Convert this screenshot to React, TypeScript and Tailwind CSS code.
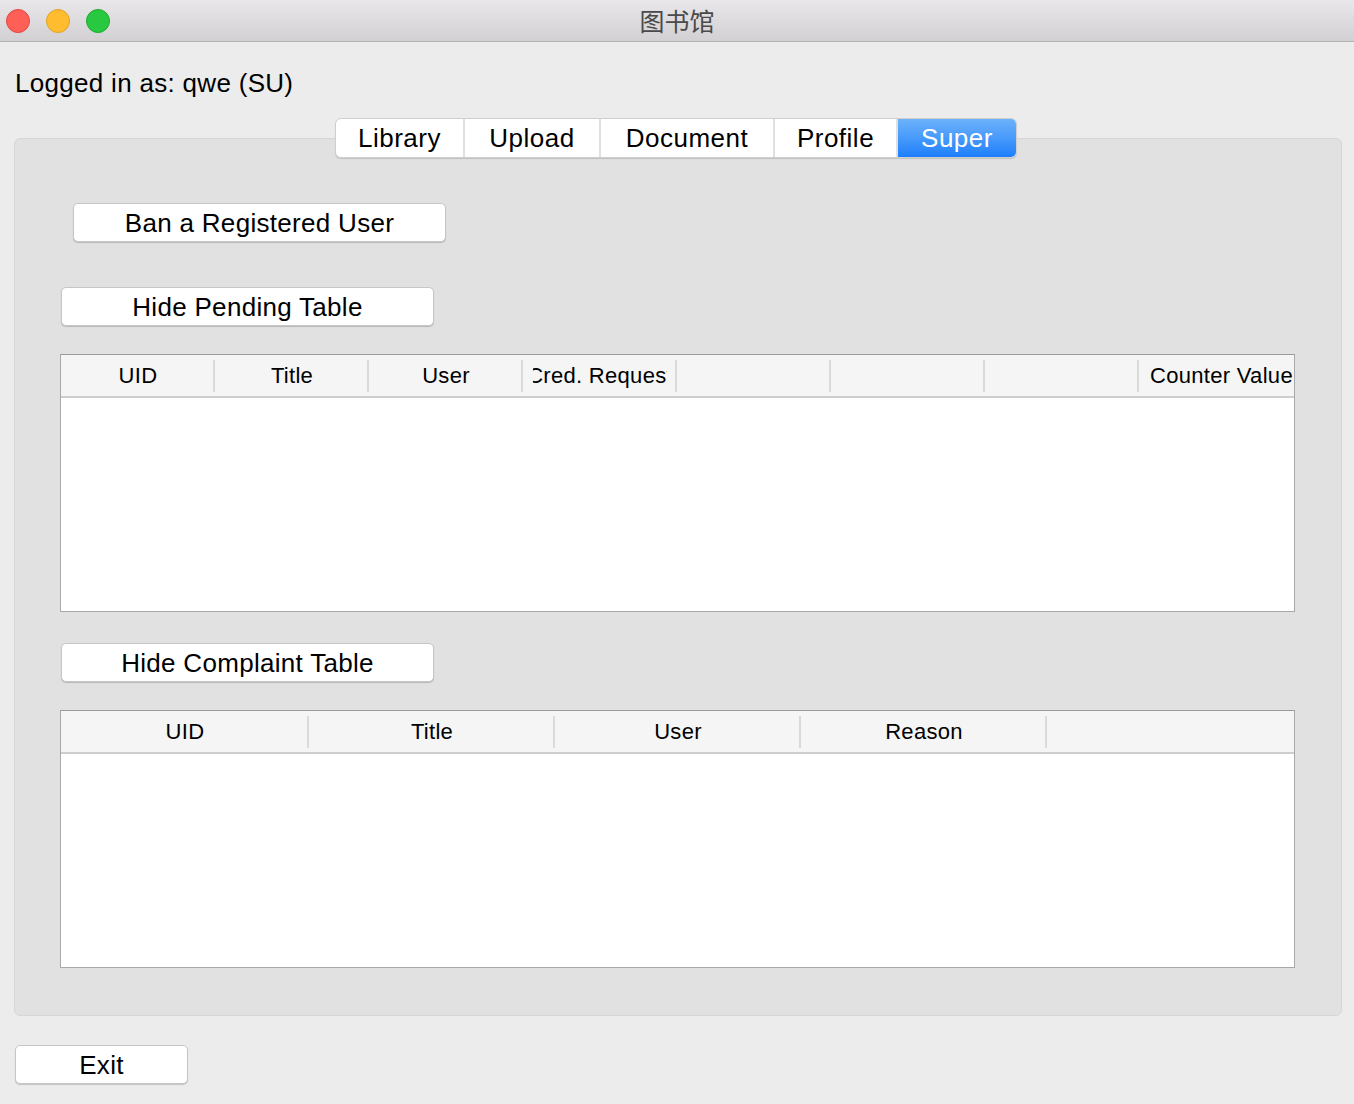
import React from "react";

const font = { fontFamily: '"Liberation Sans", Arial, sans-serif' };

function MacButton({ label, className }: { label: string; className: string }) {
  return (
    <div
      className={
        "flex items-center justify-center rounded-[5px] border border-[#c6c6c6] bg-white text-[26px] leading-none tracking-[0.3px] text-black shadow-[0_1px_1px_rgba(0,0,0,0.18)] " +
        className
      }
    >
      {label}
    </div>
  );
}

function HeaderCell({ label, w, last }: { label: string; w: string; last?: boolean }) {
  return (
    <div className={"relative flex h-full shrink-0 items-center " + w}>
      <div className={"flex h-full min-w-0 flex-1 items-center " + (last ? "px-[11px]" : "px-[10px]")}>
        <div className="flex h-full min-w-0 flex-1 items-center justify-center overflow-hidden whitespace-nowrap">
          <span className="shrink-0">{label}</span>
        </div>
      </div>
      {!last && <div className="absolute right-0 top-[5px] h-[32px] w-[2px] bg-[#dadada]" />}
    </div>
  );
}

function Table({ cols, widths }: { cols: string[]; widths: string[] }) {
  return (
    <div className="flex h-[258px] w-[1235px] flex-col border border-[#a9a9a9] border-t-[#9a9a9a] bg-white">
      <div className="flex h-[43px] border-b-2 border-[#cecece] bg-[#f5f5f5] text-[22px] tracking-[0.3px] text-black">
        {cols.map((c, i) => (
          <HeaderCell key={i} label={c} w={widths[i]} last={i === cols.length - 1} />
        ))}
      </div>
      <div className="flex-1 bg-white" />
    </div>
  );
}

export default function App() {
  const tabs = [
    { n: "Library", w: "w-[129px]" },
    { n: "Upload", w: "w-[136px]" },
    { n: "Document", w: "w-[174px]" },
    { n: "Profile", w: "w-[123px]" },
  ];
  return (
    <div className="flex h-[1104px] w-[1354px] flex-col overflow-hidden bg-[#ececec]" style={font}>
      {/* title bar */}
      <div className="relative flex h-[42px] shrink-0 items-center border-b border-[#b4b2b4] bg-gradient-to-b from-[#e9e7e9] to-[#d2d0d2]">
        <div className="flex items-center gap-[16px] pl-[6px]">
          <div className="h-[24px] w-[24px] rounded-full border border-[#e2463f] bg-[#fe5f57]" />
          <div className="h-[24px] w-[24px] rounded-full border border-[#e1a325] bg-[#febc2e]" />
          <div className="h-[24px] w-[24px] rounded-full border border-[#1dac2c] bg-[#28c840]" />
        </div>
        <div
          className="absolute left-0 right-0 top-0 flex h-[41px] items-center justify-center text-[25px] text-[#4a4a4a]"
          style={{ fontFamily: '"Noto Sans CJK SC", "Liberation Sans", sans-serif' }}
        >
          图书馆
        </div>
      </div>

      {/* logged in */}
      <div className="mt-[26px] pl-[15px] text-[26px] leading-[30px] tracking-[0.3px] text-black">Logged in as: qwe (SU)</div>

      {/* tab widget */}
      <div className="mt-[20px] flex flex-col pl-[14px] pr-[12px]">
        <div className="relative z-10 flex pl-[321px]">
          <div className="flex h-[40px] overflow-hidden rounded-[6px] border border-[#cfcfcf] bg-white text-[26px] tracking-[0.5px] text-black shadow-[0_1px_1px_rgba(0,0,0,0.15)]">
            {tabs.map((t) => (
              <div key={t.n} className={"flex items-center justify-center border-r-2 border-[#e0e0e0] " + t.w}>
                {t.n}
              </div>
            ))}
            <div className="flex w-[118px] items-center justify-center bg-gradient-to-b from-[#6cb2fa] to-[#1a7ffb] text-white">
              Super
            </div>
          </div>
        </div>
        <div className="-mt-[20px] flex h-[878px] flex-col rounded-[6px] border border-[#d6d6d6] bg-[#e1e1e1] pl-[45px]">
          <MacButton label="Ban a Registered User" className="ml-[13px] mt-[64px] h-[39px] w-[373px]" />
          <MacButton label="Hide Pending Table" className="ml-[1px] mt-[45px] h-[39px] w-[373px]" />
          <div className="mt-[28px]">
            <Table
              cols={["UID", "Title", "User", "Cred. Request", "", "", "", "Counter Value"]}
              widths={[
                "w-[154px]",
                "w-[154px]",
                "w-[154px]",
                "w-[154px]",
                "w-[154px]",
                "w-[154px]",
                "w-[154px]",
                "flex-1",
              ]}
            />
          </div>
          <MacButton label="Hide Complaint Table" className="ml-[1px] mt-[31px] h-[39px] w-[373px]" />
          <div className="mt-[28px]">
            <Table
              cols={["UID", "Title", "User", "Reason", ""]}
              widths={["w-[248px]", "w-[246px]", "w-[246px]", "w-[246px]", "flex-1"]}
            />
          </div>
        </div>
      </div>

      {/* exit */}
      <div className="mt-[29px] pl-[15px]">
        <MacButton label="Exit" className="h-[39px] w-[173px]" />
      </div>
    </div>
  );
}
